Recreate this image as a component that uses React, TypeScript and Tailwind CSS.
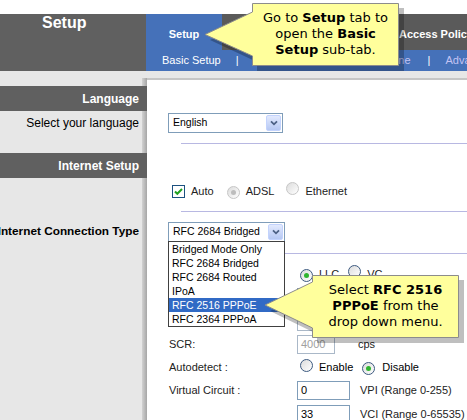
import React from "react";

const Chevron = () => (
  <span className="ml-auto mr-px flex h-[16px] w-[15px] shrink-0 items-center justify-center rounded-[2px] border border-[#c3d3fd] bg-linear-to-b from-[#e3eafe] to-[#b6c8f3]">
    <svg width="8" height="6" viewBox="0 0 8 6">
      <path d="M1,1.3 L4,4.3 L7,1.3" fill="none" stroke="#4d6185" strokeWidth="1.8" />
    </svg>
  </span>
);

const Select = ({ value, w }: { value: string; w: string }) => (
  <div className={`flex h-[20px] items-center border border-[#7f9db9] bg-white pl-[4px] text-[10.5px] ${w}`}>
    <span className="whitespace-nowrap">{value}</span>
    <Chevron />
  </div>
);

const Radio = ({ checked = false, disabled = false }: { checked?: boolean; disabled?: boolean }) => (
  <span
    className={`inline-flex h-[13px] w-[13px] shrink-0 items-center justify-center rounded-full border bg-linear-to-br from-[#dcdcdc] to-white ${
      disabled ? "border-[#c6c6c6]" : "border-[#3d5a80]"
    }`}
  >
    {checked && (
      <span className={`h-[5px] w-[5px] rounded-full ${disabled ? "bg-[#bdbdbd]" : "bg-[#2fb52f]"}`} />
    )}
  </span>
);

const Input = ({ value, w, disabled = false }: { value: string; w: string; disabled?: boolean }) => (
  <div
    className={`flex h-[19px] items-center border bg-white pl-[3px] text-[11px] ${w} ${
      disabled ? "border-[#aab8c8] text-[#a0a0a0]" : "border-[#7f9db9] text-black"
    }`}
  >
    {value}
  </div>
);

export default function App() {
  return (
    <div className="relative h-[420px] w-[467px] overflow-hidden bg-white font-['Liberation_Sans',Arial,sans-serif] text-[11px] text-black">
      <div className="h-[14px] bg-white" />
      {/* header */}
      <div className="flex h-[57px]">
        <div className="w-[146px] shrink-0 bg-[#606060] pl-[42px] text-[16px] font-bold leading-[18px] text-white">
          Setup
        </div>
        <div className="flex min-w-0 flex-1 flex-col">
          <div className="flex h-[36px] overflow-hidden bg-[#5a5a5a] text-[11px] font-bold leading-[13px] text-white">
            <div className="flex w-[76px] shrink-0 justify-center bg-[#4571b9] pt-[14px]">Setup</div>
            <div className="flex w-[177px] shrink-0 justify-around pt-[14px]">
              <span>Wireless</span>
              <span>Security</span>
            </div>
            <div className="shrink-0 whitespace-nowrap pt-[14px]">Access Policy</div>
          </div>
          <div className="flex h-[21px] items-center overflow-hidden whitespace-nowrap bg-[#4571b9] pl-[16px] text-[11px] leading-[13px] text-white">
            <span className="shrink-0">Basic Setup</span>
            <span className="ml-[15px] shrink-0">|</span>
            <span className="w-[172px] shrink-0 text-right text-[#c3c3f3]">DDNS | MAC Address Clone</span>
            <span className="ml-[17px] shrink-0">|</span>
            <span className="ml-[15px] shrink-0 text-[#c3c3f3]">Advanced Routing</span>
          </div>
        </div>
      </div>

      {/* main */}
      <div className="h-[7px] bg-[#e7e7e7]" />
      <div className="flex h-[342px]">
        <div className="w-[147px] shrink-0 bg-[linear-gradient(to_right,#e7e7e7_142px,#d2d2d2_142px,#a6a6a6_147px)] pt-[8px]">
          <div className="flex h-[25px] items-center justify-end bg-[#606060] pr-[8px] text-[12px] font-bold text-white">
            Language
          </div>
          <div className="flex h-[24px] items-center justify-end pr-[8px] text-[12px]">Select your language</div>
          <div className="mt-[18px] flex h-[25px] items-center justify-end bg-[#606060] pr-[8px] text-[12px] font-bold text-white">
            Internet Setup
          </div>
          <div className="mt-[44px] flex h-[20px] items-center justify-end whitespace-nowrap pr-[8px] text-[11.8px] font-bold">
            Internet Connection Type
          </div>
        </div>

        <div className="min-w-0 flex-1 border-t-2 border-[#c6c6c6] bg-white">
          <div className="ml-[21px] mt-[33px]">
            <Select value="English" w="w-[115px]" />
          </div>
          <div className="ml-[34px] mt-[10px] h-px bg-[#b8b8e2]" />
          <div className="ml-[25px] mt-[39px] flex h-[16px] items-center text-[11px] text-[#222]">
            <span className="flex h-[13px] w-[13px] shrink-0 items-center justify-center border border-[#1c5180] bg-white">
              <svg width="11" height="11" viewBox="0 0 11 11">
                <path d="M2,5.5 L4.3,7.8 L9,3" fill="none" stroke="#21a121" strokeWidth="2" />
              </svg>
            </span>
            <span className="ml-[6px]">Auto</span>
            <span className="ml-[13px]">
              <Radio checked disabled />
            </span>
            <span className="ml-[6px]">ADSL</span>
            <span className="ml-[12px]">
              <Radio disabled />
            </span>
            <span className="ml-[6px]">Ethernet</span>
          </div>
          <div className="ml-[34px] mt-[12px] h-px bg-[#b8b8e2]" />
          <div className="relative ml-[21px] mt-[10px] w-[117px]">
            <Select value="RFC 2684 Bridged" w="w-[117px]" />
            <div className="absolute left-0 top-[19px] z-10 w-[117px] border border-[#404040] bg-white text-[10.5px]">
              {["Bridged Mode Only", "RFC 2684 Bridged", "RFC 2684 Routed", "IPoA", "RFC 2516 PPPoE", "RFC 2364 PPPoA"].map(
                (t) => (
                  <div
                    key={t}
                    className={`h-[14px] whitespace-nowrap pl-[3px] leading-[14px] ${
                      t === "RFC 2516 PPPoE" ? "bg-[#316ac5] text-white" : "text-black"
                    }`}
                  >
                    {t}
                  </div>
                )
              )}
            </div>
          </div>
          <div className="ml-[34px] mt-[11px] h-px bg-[#b8b8e2]" />
          <div className="ml-[22px] mt-[8px] text-[11px] text-[#222]">
            <div className="flex h-[24px] items-center">
              <div className="w-[128px] shrink-0">Multiplexing :</div>
              <span className="ml-[3px]">
                <Radio checked />
              </span>
              <span className="ml-[6px]">LLC</span>
              <span className="ml-[9px]">
                <Radio />
              </span>
              <span className="ml-[6px]">VC</span>
            </div>
            <div className="flex h-[24px] items-center">
              <div className="w-[128px] shrink-0">Qos Type :</div>
              <Select value="UBR" w="w-[60px]" />
            </div>
            <div className="flex h-[22px] items-center">
              <div className="w-[128px] shrink-0">Pcr Rate :</div>
              <Input value="4000" w="w-[38px]" disabled />
              <span className="ml-[23px]">cps</span>
            </div>
            <div className="flex h-[24px] items-center">
              <div className="w-[128px] shrink-0">SCR:</div>
              <Input value="4000" w="w-[38px]" disabled />
              <span className="ml-[23px]">cps</span>
            </div>
            <div className="flex h-[23px] items-center">
              <div className="w-[128px] shrink-0">Autodetect :</div>
              <span className="ml-[3px]">
                <Radio />
              </span>
              <span className="ml-[6px] text-black">Enable</span>
              <span className="ml-[9px]">
                <Radio checked />
              </span>
              <span className="ml-[7px] text-black">Disable</span>
            </div>
            <div className="flex h-[23px] items-center">
              <div className="w-[128px] shrink-0">Virtual Circuit :</div>
              <Input value="0" w="w-[53px]" />
              <span className="ml-[10px]">VPI (Range 0-255)</span>
            </div>
            <div className="flex h-[24px] items-center">
              <div className="w-[128px] shrink-0" />
              <Input value="33" w="w-[53px]" />
              <span className="ml-[10px] whitespace-nowrap">VCI (Range 0-65535)</span>
            </div>
          </div>
        </div>
      </div>

      {/* callouts */}
      <svg className="pointer-events-none absolute left-0 top-0 z-20" width="467" height="420" viewBox="0 0 467 420">
        <path d="M257,8 H404 V71 H257 V62 L210,40 L257,18 Z" fill="rgba(0,0,0,0.25)" />
        <path d="M252.5,3.5 H398.5 V65.5 H252.5 V56 L205,34.5 L252.5,12 Z" fill="#ffff9c" stroke="#8c8c8c" />
        <path d="M317,280 H464 V343 H317 V334 L270,311 L317,288 Z" fill="rgba(0,0,0,0.25)" />
        <path d="M312.5,275.5 H458.5 V337.5 H312.5 V328 L265,305 L312.5,282 Z" fill="#ffff9c" stroke="#8c8c8c" />
      </svg>
      <div className="absolute left-[252px] top-[3px] z-30 flex h-[62px] w-[147px] items-center justify-center text-center font-['DejaVu_Sans',Verdana,sans-serif] text-[13px] leading-[16px] text-black">
        <div>
          Go to <b>Setup</b> tab to
          <br />
          open the <b>Basic</b>
          <br />
          <b>Setup</b> sub-tab.
        </div>
      </div>
      <div className="absolute left-[312px] top-[275px] z-30 flex h-[62px] w-[147px] items-center justify-center text-center font-['DejaVu_Sans',Verdana,sans-serif] text-[13px] leading-[16px] text-black">
        <div>
          Select <b>RFC 2516</b>
          <br />
          <b>PPPoE</b> from the
          <br />
          drop down menu.
        </div>
      </div>
    </div>
  );
}
